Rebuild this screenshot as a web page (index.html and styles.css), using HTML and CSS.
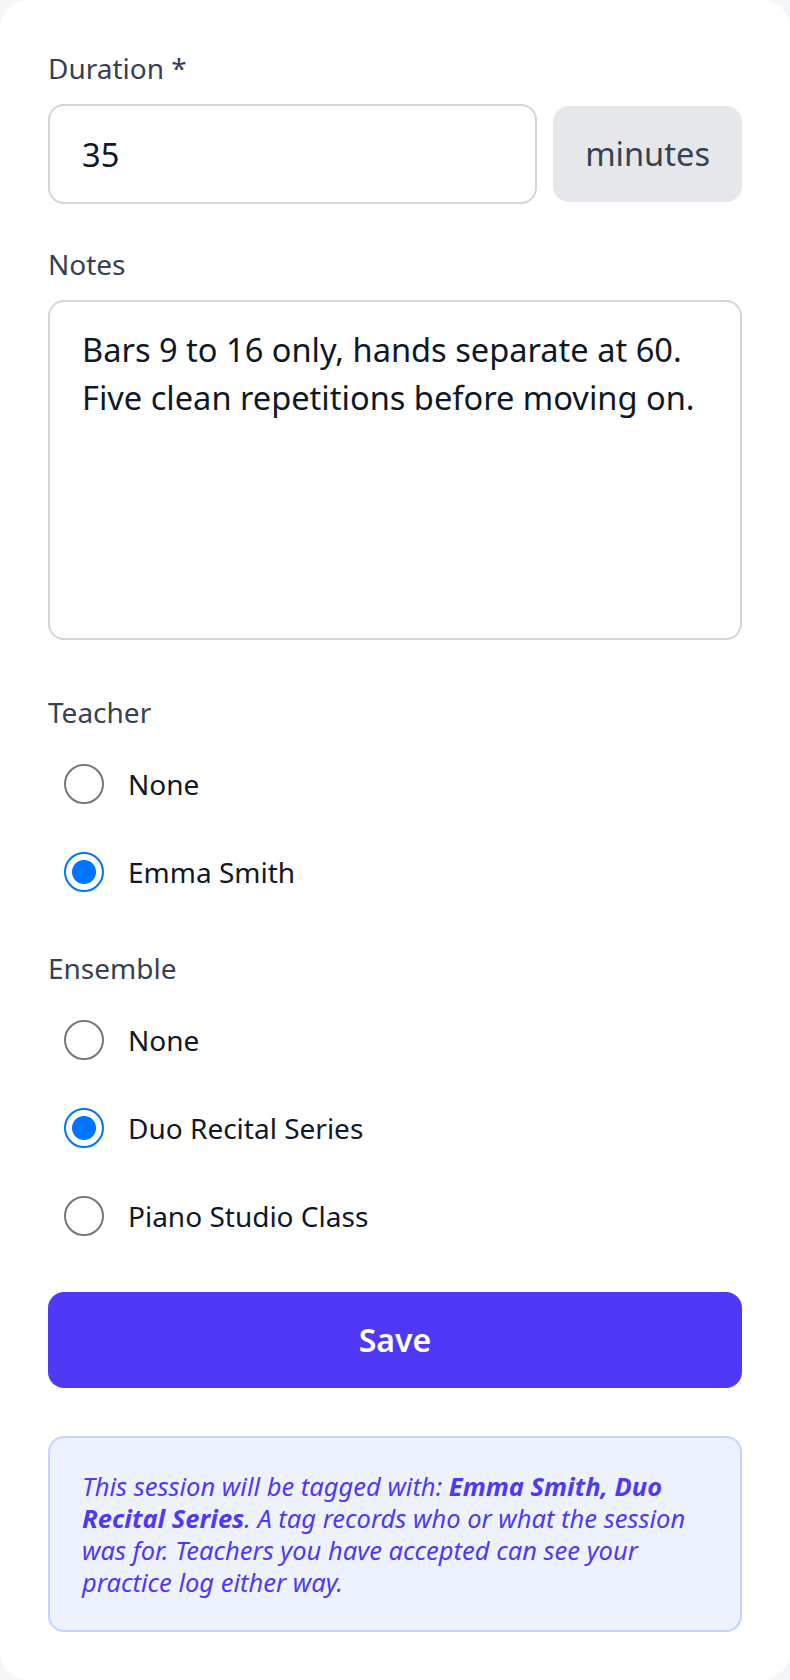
FILE: index.html
```html
<!DOCTYPE html>
<html lang="en">
<head>
<meta charset="utf-8">
<title>Practice session</title>
<link rel="stylesheet" href="styles.css">
</head>
<body>
<form class="card">
  <div class="field">
    <label class="label" for="duration">Duration *</label>
    <div class="input-row">
      <input class="input" id="duration" type="text" value="35">
      <span class="addon">minutes</span>
    </div>
  </div>

  <div class="field field-notes">
    <label class="label" for="notes">Notes</label>
    <textarea class="textarea" id="notes">Bars 9 to 16 only, hands separate at 60. Five clean repetitions before moving on.</textarea>
  </div>

  <fieldset class="group group-teacher">
    <legend class="label group-label">Teacher</legend>
    <label class="option"><input class="radio" type="radio" name="teacher"><span>None</span></label>
    <label class="option"><input class="radio" type="radio" name="teacher" checked><span>Emma Smith</span></label>
  </fieldset>

  <fieldset class="group group-ensemble">
    <legend class="label group-label">Ensemble</legend>
    <label class="option"><input class="radio" type="radio" name="ensemble"><span>None</span></label>
    <label class="option"><input class="radio" type="radio" name="ensemble" checked><span>Duo Recital Series</span></label>
    <label class="option"><input class="radio" type="radio" name="ensemble"><span>Piano Studio Class</span></label>
  </fieldset>

  <button class="save" type="button">Save</button>

  <p class="info">This session will be tagged with: <strong>Emma Smith, Duo Recital Series</strong>. A tag records who or what the session was for. Teachers you have accepted can see your practice log either way.</p>
</form>
</body>
</html>
```

FILE: styles.css
```css
* {
  box-sizing: border-box;
}

html {
  background: #f5f6f8;
}

body {
  margin: 0;
  font-family: "Noto Sans", "Open Sans", sans-serif;
  color: #101828;
}

.card {
  display: flex;
  flex-direction: column;
  min-height: 1680px;
  margin: 0;
  padding: 48px 48px 48px;
  background: #ffffff;
  border-radius: 28px;
}

.field {
  display: flex;
  flex-direction: column;
}

.field-notes {
  margin-top: 40px;
}

.label {
  display: block;
  font-size: 28px;
  line-height: 40px;
  font-weight: 450;
  color: #364153;
  margin-bottom: 16px;
}

.input-row {
  display: flex;
  align-items: center;
  gap: 16px;
}

.input {
  flex: 1;
  min-width: 0;
  height: 100px;
  padding: 24px 32px;
  border: 2px solid #d1d5dc;
  border-radius: 16px;
  font: inherit;
  font-size: 32.6px;
  line-height: 48px;
  color: #101828;
  background: #fff;
  outline: none;
}

.addon {
  display: flex;
  align-items: center;
  height: 96px;
  padding: 0 32px;
  background: #e5e7eb;
  border-radius: 16px;
  font-size: 32.6px;
  line-height: 48px;
  color: #364153;
}

.textarea {
  display: block;
  width: 100%;
  height: 340px;
  padding: 24px 32px;
  border: 2px solid #d1d5dc;
  border-radius: 16px;
  font: inherit;
  font-size: 32.6px;
  line-height: 48px;
  color: #101828;
  background: #fff;
  resize: none;
  outline: none;
}

.group {
  margin: 0;
  padding: 0;
  border: 0;
  min-width: 0;
}

.group-teacher {
  margin-top: 52px;
}

.group-ensemble {
  margin-top: 32px;
}

.group-label {
  padding: 0;
  margin-bottom: 8px;
  float: left;
  width: 100%;
}

.option {
  clear: both;
  display: flex;
  align-items: center;
  gap: 24px;
  padding: 24px 16px;
  font-size: 28px;
  line-height: 40px;
  color: #101828;
}

.radio {
  appearance: none;
  -webkit-appearance: none;
  flex: none;
  width: 40px;
  height: 40px;
  margin: 0;
  border: 2px solid #767676;
  border-radius: 50%;
  background: #fff;
}

.radio:checked {
  border-color: #0075ff;
  background: radial-gradient(circle, #0075ff 0 11.5px, #ffffff 12.5px);
}

.save {
  margin-top: 32px;
  height: 96px;
  width: 100%;
  border: 0;
  border-radius: 16px;
  background: #4f39f6;
  color: #ffffff;
  font: inherit;
  font-size: 32px;
  font-weight: 600;
  line-height: 48px;
}

.info {
  margin: 48px 0 0;
  padding: 32px;
  border: 2px solid #c6d2ff;
  border-radius: 16px;
  background: #eef2ff;
  color: #4f39f6;
  font-size: 25.5px;
  line-height: 32px;
  font-style: italic;
}

.info strong {
  font-weight: 700;
}
```
